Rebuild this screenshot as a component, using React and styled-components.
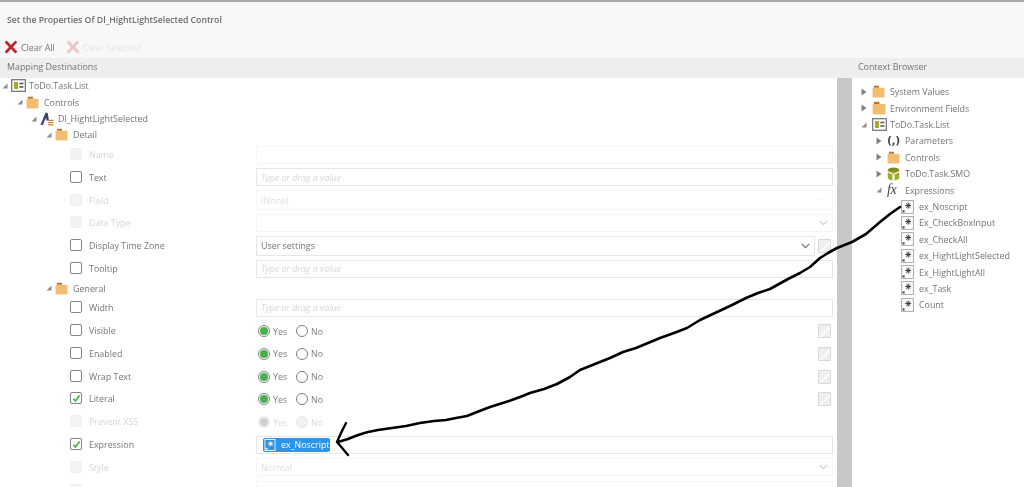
import React from "react";
import styled, { createGlobalStyle } from "styled-components";

const Global = createGlobalStyle`
  html, body { margin: 0; padding: 0; background: #fff; }
  body { font-family: "Open Sans", "Liberation Sans", sans-serif; color: #747474; font-size: 8.9px; overflow: hidden; }
`;
const Page = styled.div`
  position: relative; width: 1024px; height: 487px; overflow: hidden;
  display: flex; flex-direction: column; background: #fff; filter: blur(.3px);
`;
const TitleBar = styled.div`
  height: 36px; flex: none; padding-left: 7px; display: flex; align-items: center;
  background: #f8f8f8; border-top: 2px solid #a9a9a9; box-sizing: border-box; padding-top: 1px;
  font-size: 8.7px; font-weight: 600; color: #6c6c6c;
`;
const Toolbar = styled.div`
  height: 22px; flex: none; background: #f8f8f8; display: flex; align-items: center; padding: 0 0 0 4px; box-sizing: border-box; gap: 11px;
`;
const ToolButton = styled.div`
  display: flex; align-items: center; gap: 3px; font-size: 8.9px;
  color: ${p => (p.$off ? "#e4e4e4" : "#747474")};
`;
const Columns = styled.div`flex: 1; display: flex; min-height: 0;`;
const LeftPane = styled.div`width: 837px; flex: none; display: flex; flex-direction: column; overflow: hidden;`;
const Splitter = styled.div`width: 15px; flex: none; margin-top: 19px; background: #c8c8c8;`;
const RightPane = styled.div`flex: 1; display: flex; flex-direction: column; margin-left: -15px; overflow: hidden;`;
const PaneHead = styled.div`
  height: 19.6px; flex: none; background: #eeeeee; display: flex; align-items: center;
  padding-left: ${p => p.$pad}px; font-size: 8.9px; color: #747474; box-sizing: border-box; padding-bottom: 3px;
`;
const RightBody = styled.div`padding: 6px 0 0 15px;`;
const TreeRow = styled.div`
  height: 16.4px; flex: none; display: flex; align-items: center; padding-left: ${p => p.$indent}px; white-space: nowrap;
`;
const Twisty = styled.span`
  width: ${p => (p.$wide ? 11 : 9)}px; flex: none; display: flex; align-items: center;
`;
const IconSlot = styled.span`
  width: 18px; flex: none; display: flex; align-items: center; justify-content: flex-start;
`;
const FxMark = styled.span`
  font-family: "Liberation Serif", serif; font-style: italic; font-size: 14px; font-weight: 400; color: #444; line-height: 1; letter-spacing: -.5px;
`;
const ParenMark = styled.span`
  font-family: "DejaVu Sans", sans-serif; font-size: 11px; font-weight: 700; color: #4a4a4a; line-height: 1; letter-spacing: -.5px;
`;
const PropRow = styled.div`
  height: 22.8px; flex: none; display: flex; align-items: center; padding-left: 70px; box-sizing: border-box;
  color: ${p => (p.$off ? "#d6d6d6" : "#767676")};
`;
const CheckBox = styled.span`
  width: 12px; height: 12px; flex: none; border-radius: 2px; display: flex; align-items: center; justify-content: center;
  box-sizing: border-box; margin-top: -1px;
  border: 1px solid ${p => (p.$off ? "#f0f0f0" : "#858585")};
  background: ${p => (p.$off ? "#f3f3f3" : "#fff")};
`;
const PropLabel = styled.span`width: 174px; flex: none; padding-left: 7px; box-sizing: border-box;`;
const Field = styled.div`
  height: ${p => (p.$tall ? 20 : 18)}px; box-sizing: border-box; flex: 1; margin-right: 4px; min-width: 0;
  border: ${p => (p.$off ? "1px solid #f5f5f5" : "1.5px solid #e6e6e6")};
  display: flex; align-items: center; justify-content: space-between; padding: 0 4px;
  color: ${p => (p.$off ? "#dedede" : "#747474")}; font-size: 8.9px;
`;
const ZoneField = styled(Field)`margin-right: 0;`;
const Hint = styled.span`font-style: italic; color: #d6d6d6; font-size: 8.9px;`;
const Ellipsis = styled.span`color: #e2e2e2; letter-spacing: 0; margin-right: 2px; line-height: 1;`;
const Token = styled.span`
  display: flex; align-items: center; gap: 5px; height: 14px; background: #2b95e9; color: #fff; border-radius: 2px;
  padding: 0 1px 0 1px; font-size: 8.9px; margin-left: 2px; white-space: nowrap;
`;
const RadioLine = styled.div`flex: 1; display: flex; align-items: center; margin: 1px 6px 0 2px; font-size: 8.9px;`;
const Radio = styled.span`
  width: 12px; height: 12px; border-radius: 50%; flex: none; box-sizing: border-box; display: flex; align-items: center; justify-content: center;
  border: 1px solid ${p => (p.$off ? "#e6e6e6" : "#808080")};
  background: ${p => (p.$off ? "#f2f2f2" : "#fff")};
  &::after { content: ""; width: 8px; height: 8px; border-radius: 50%; display: ${p => (p.$on ? "block" : "none")}; background: ${p => (p.$off ? "#cfcfcf" : "#46b04c")}; }
`;
const RadioText = styled.span`
  margin-left: 3px; width: ${p => p.$w}px; color: ${p => (p.$off ? "#d8d8d8" : "#7e7e7e")};
`;
const Spacer = styled.span`flex: 1;`;
const MiniBtn = styled.span`
  width: 13px; height: 14px; flex: none; border: 1px solid #d8d8d8; background: #efefef; box-sizing: border-box; border-radius: 1px; display: block; overflow: hidden;
`;
const ZoneWrap = styled.div`flex: 1; display: flex; align-items: center; gap: 3px; margin-right: 6px; min-width: 0;`;
const Overlay = styled.svg`position: absolute; inset: 0; pointer-events: none;`;

const Arrow = ({ open }) => open
  ? <svg width="6" height="6" viewBox="0 0 6 6"><path d="M5.5 .5V5.5H.5Z" fill="#8d8d8d" /></svg>
  : <svg width="6" height="8" viewBox="0 0 6 8"><path d="M.5 .5L5.5 4 .5 7.5Z" fill="#7d8383" /></svg>;

const Folder = ({ big }) => (
  <svg width={big ? 14 : 13} height={big ? 14 : 13} viewBox="0 0 14 14">
    <path d="M2 .8h5.5V3H2Z" fill="#b3752e" />
    <path d="M.6 3h12.8v10.4H.6Z" fill="#f2bd70" />
  </svg>
);
const FormIcon = () => (
  <svg width="15" height="13" viewBox="0 0 15 13">
    <rect x=".7" y=".7" width="13.6" height="11.6" fill="#fff" stroke="#6b6f73" strokeWidth="1.2" />
    <rect x="3" y="3" width="4" height="7" fill="#a8a92a" />
    <path d="M8.4 4.5h4M8.4 8h4" stroke="#4b4f54" strokeWidth="1.4" />
  </svg>
);
const ControlIcon = () => (
  <svg width="14" height="14" viewBox="0 0 14 14">
    <path d="M.5 13L5.5 .8H7.6L9 8.6H6.5L6.2 6 4.2 9.6 3 13Z" fill="#39456e" />
    <path d="M8 8.4h5.5M8 10.6h5.5M8 12.8h5.5" stroke="#c9833a" strokeWidth="1.3" />
  </svg>
);
const SmoIcon = () => (
  <svg width="13" height="14" viewBox="0 0 13 14">
    <path d="M.8 3.5V11.5Q3 13.6 6.5 13.6T12.2 11.5V3.5Z" fill="#a3ab2a" />
    <ellipse cx="6.5" cy="2.8" rx="5.7" ry="2.2" fill="#7f8b1f" />
    <path d="M5.4 6v7.4h2.2V6ZM1 4.2l4.6 2h1.8l4.6-2-.2 1.4L7.6 7.6H5.4L1.2 5.6Z" fill="#fff" />
  </svg>
);
const ExprIcon = ({ light }) => (
  <svg width={light ? 12 : 13} height={light ? 12 : 14} viewBox="0 0 13 14">
    <rect x=".6" y=".6" width="11.8" height="12.8" fill={light ? "#2b95e9" : "#fff"} stroke={light ? "#fff" : "#a9a9a9"} strokeWidth="1" />
    <path d="M7.2 2.6v6M4.2 5.6h6M5.1 3.5l4.2 4.2M9.3 3.5L5.1 7.7" stroke={light ? "#fff" : "#3b3b3b"} strokeWidth="1" />
    <rect x="1.6" y="10.4" width="2" height="2" fill={light ? "#fff" : "#3b3b3b"} />
  </svg>
);
const Cross = ({ off }) => (
  <svg width="14" height="14" viewBox="0 0 14 14">
    <path d="M.6 2.4L2.6.6 7 5 11.4.6 13.2 2.2 9 7 13.4 11.8 11.2 13.4 7 9 2.8 13.4.6 11.8 5 7Z" fill={off ? "#edc6c6" : "#bf272d"} />
  </svg>
);
const Tick = () => (
  <svg width="9" height="9" viewBox="0 0 9 9"><path d="M1.4 4.8L3.4 7 7.6 1.4" fill="none" stroke="#43ad4a" strokeWidth="1.7" /></svg>
);
const Chevron = ({ off }) => (
  <svg width="9" height="6" viewBox="0 0 9 6"><path d="M.7 .8L4.5 4.6 8.3 .8" fill="none" stroke={off ? "#cfcfcf" : "#6d6d6d"} strokeWidth="1.1" /></svg>
);
const Slash = () => (
  <svg width="13" height="14" viewBox="0 0 13 14"><path d="M1 12L11 2" stroke="#fff" strokeWidth="1.6" /></svg>
);

const Tree = ({ indent, open, closed, wide, icon, children }) => (
  <TreeRow $indent={indent}>
    <Twisty $wide={wide}>{open ? <Arrow open /> : closed ? <Arrow /> : null}</Twisty>
    <IconSlot>{icon}</IconSlot>
    <span>{children}</span>
  </TreeRow>
);

const Prop = ({ label, off, checked, children }) => (
  <PropRow $off={off}>
    <CheckBox $off={off}>{checked && <Tick />}</CheckBox>
    <PropLabel>{label}</PropLabel>
    {children}
  </PropRow>
);

const HINT = "Type or drag a value";
const TextField = () => <Field><Hint>{HINT}</Hint></Field>;

const YesNo = ({ off, noBtn }) => (
  <RadioLine>
    <Radio $on $off={off} /><RadioText $off={off} $w={23}>Yes</RadioText>
    <Radio $off={off} /><RadioText $off={off} $w={20}>No</RadioText>
    <Spacer />
    {!noBtn && <MiniBtn><Slash /></MiniBtn>}
  </RadioLine>
);

const exprs = ["ex_Noscript", "Ex_CheckBoxInput", "ex_CheckAll", "ex_HightLightSelected", "Ex_HightLightAll", "ex_Task", "Count"];

export default function App() {
  return (
    <Page>
      <Global />
      <TitleBar>Set the Properties Of Dl_HightLightSelected Control</TitleBar>
      <Toolbar>
        <ToolButton><Cross />Clear All</ToolButton>
        <ToolButton $off><Cross off />Clear Selected</ToolButton>
      </Toolbar>
      <Columns>
        <LeftPane>
          <PaneHead $pad={7}>Mapping Destinations</PaneHead>
          <Tree indent={2} open icon={<FormIcon />}>ToDo.Task.List</Tree>
          <Tree indent={17} open icon={<Folder />}>Controls</Tree>
          <Tree indent={31} open icon={<ControlIcon />}>Dl_HightLightSelected</Tree>
          <Tree indent={46} open icon={<Folder />}>Detail</Tree>
          <Prop label="Name" off><Field $off /></Prop>
          <Prop label="Text"><TextField /></Prop>
          <Prop label="Field" off><Field $off $tall>(None)<Ellipsis>···</Ellipsis></Field></Prop>
          <Prop label="Data Type" off><Field $off><span /><Chevron off /></Field></Prop>
          <Prop label="Display Time Zone">
            <ZoneWrap>
              <ZoneField $tall>User settings<Chevron /></ZoneField>
              <MiniBtn><Slash /></MiniBtn>
            </ZoneWrap>
          </Prop>
          <Prop label="Tooltip"><TextField /></Prop>
          <Tree indent={46} open icon={<Folder />}>General</Tree>
          <Prop label="Width"><TextField /></Prop>
          <Prop label="Visible"><YesNo /></Prop>
          <Prop label="Enabled"><YesNo /></Prop>
          <Prop label="Wrap Text"><YesNo /></Prop>
          <Prop label="Literal" checked><YesNo /></Prop>
          <Prop label="Prevent XSS" off><YesNo off noBtn /></Prop>
          <Prop label="Expression" checked>
            <Field><Token><ExprIcon light />ex_Noscript</Token></Field>
          </Prop>
          <Prop label="Style" off><Field $off>Normal<Chevron off /></Field></Prop>
          <Prop off><Field $off /></Prop>
        </LeftPane>
        <Splitter />
        <RightPane>
          <PaneHead $pad={21}>Context Browser</PaneHead>
          <RightBody>
            <Tree wide indent={9} closed icon={<Folder />}>System Values</Tree>
            <Tree wide indent={9} closed icon={<Folder big />}>Environment Fields</Tree>
            <Tree wide indent={9} open icon={<FormIcon />}>ToDo.Task.List</Tree>
            <Tree wide indent={24} closed icon={<ParenMark>(,)</ParenMark>}>Parameters</Tree>
            <Tree wide indent={24} closed icon={<Folder />}>Controls</Tree>
            <Tree wide indent={24} closed icon={<SmoIcon />}>ToDo.Task.SMO</Tree>
            <Tree wide indent={24} open icon={<FxMark>fx</FxMark>}>Expressions</Tree>
            {exprs.map(e => <Tree wide key={e} indent={38} icon={<ExprIcon />}>{e}</Tree>)}
          </RightBody>
        </RightPane>
      </Columns>
      <Overlay width="1024" height="487" viewBox="0 0 1024 487">
        <path
          d="M338 442L348 439 358 435 368 432 378 430 392 428 406 426 420 423 434 421 446 420 456 418 467 416 477 412 490 407 509 401 520 397 530 393 544 389 557 384 570 377 580 370 595 364 610 358 623 352 636 348 648 343 660 338 674 333 687 328 700 320 715 313 730 306 746 298 758 293 770 289 788 279 800 273 810 267 820 258 828 253 837 248 852 242 866 234 880 222 890 214 900 207"
          fill="none" stroke="#000" strokeWidth="2.6" strokeLinejoin="round" strokeLinecap="round"
        />
        <path d="M346 423L341 433 337 442 343 449 348 455" fill="none" stroke="#000" strokeWidth="2.4" strokeLinejoin="round" strokeLinecap="round" />
      </Overlay>
    </Page>
  );
}
